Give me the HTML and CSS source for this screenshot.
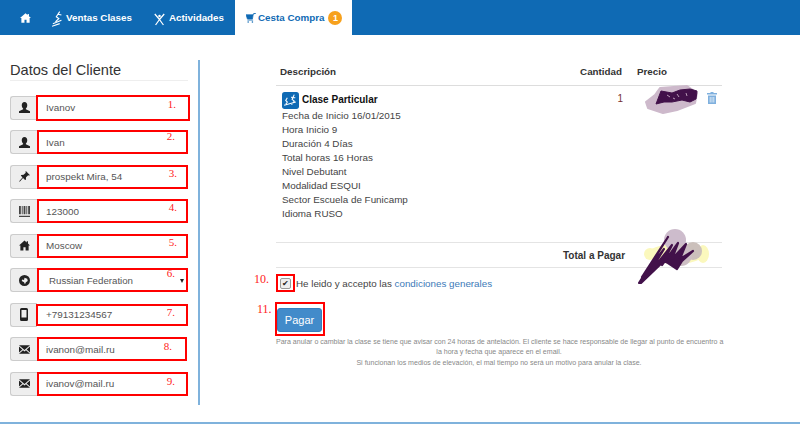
FILE: index.html
```html
<!DOCTYPE html>
<html lang="es">
<head>
<meta charset="utf-8">
<title>Cesta Compra</title>
<link rel="stylesheet" href="styles.css">
</head>
<body>
<nav class="nav">
  <a class="tab tab-home"><svg class="ic-home" viewBox="0 0 16 14"><path d="M8 0 L0 7 L2 7 L2 14 L6.5 14 L6.5 9.5 L9.5 9.5 L9.5 14 L14 14 L14 7 L16 7 L13 4.4 L13 1 L11 1 L11 2.7 Z" fill="#fff"/></svg></a>
  <a class="tab tab-ventas"><svg class="ic-ski" viewBox="0 0 14 18"><path d="M9 1 L5 7 L8 9 L4 13 M7 4 L11 5 M1 15 L11 11 M0 18 L9 15" fill="none" stroke="#fff" stroke-width="1.3"/></svg>Ventas Clases</a>
  <a class="tab tab-act"><svg class="ic-act" viewBox="0 0 14 16"><circle cx="7" cy="3.5" r="1.6" fill="#fff"/><path d="M1 1 L7 8 L13 1 M7 8 L2 15 M7 8 L12 15" fill="none" stroke="#fff" stroke-width="1.6"/></svg>Actividades</a>
  <a class="tab tab-active"><svg class="ic-cart" viewBox="0 0 14 13"><path d="M0 2 L10 2 L9 8 L2 8 Z M10 2 L11 0 L14 0 M2 9.5 L10 9.5" fill="#0f6ab4" stroke="#0f6ab4" stroke-width="1"/><circle cx="3" cy="12" r="1.1" fill="#0f6ab4"/><circle cx="9" cy="12" r="1.1" fill="#0f6ab4"/></svg>Cesta Compra<span class="badge">1</span></a>
</nav>

<main class="main">
  <section class="client">
    <h2 class="title">Datos del Cliente</h2>
    <div class="rows">
      <div class="row"><span class="addon"><svg class="ic" viewBox="0 0 12 12"><path d="M6 0 C8 0 9 1.5 9 3.5 C9 5 8.3 6.3 7.5 7 L7.5 8 L12 10 L12 12 L0 12 L0 10 L4.5 8 L4.5 7 C3.7 6.3 3 5 3 3.5 C3 1.5 4 0 6 0 Z"/></svg></span><div class="field f1">Ivanov<span class="num n1">1.</span></div></div>
      <div class="row"><span class="addon"><svg class="ic" viewBox="0 0 12 12"><path d="M6 0 C8 0 9 1.5 9 3.5 C9 5 8.3 6.3 7.5 7 L7.5 8 L12 10 L12 12 L0 12 L0 10 L4.5 8 L4.5 7 C3.7 6.3 3 5 3 3.5 C3 1.5 4 0 6 0 Z"/></svg></span><div class="field">Ivan<span class="num n2">2.</span></div></div>
      <div class="row"><span class="addon"><svg class="ic" viewBox="0 0 12 12"><path d="M7.5 0 L12 4.5 L10.8 5 L10 4.6 L7.7 6.9 L7.5 9.5 L6.6 9.7 L4.4 7.6 L0.8 11.6 L0.2 11.2 L3.8 7 L2 5 L2.5 4.3 L5 4 L7.4 1.8 L7 1 Z"/></svg></span><div class="field">prospekt Mira, 54<span class="num n3">3.</span></div></div>
      <div class="row"><span class="addon"><svg class="ic ic-bar" viewBox="0 0 12 12"><path d="M0 0H2V9H0ZM3 0H4V9H3ZM5 0H7V9H5ZM8 0H9V9H8ZM10 0H12V9H10ZM0 10.5H12V12H0Z"/></svg></span><div class="field">123000<span class="num n4">4.</span></div></div>
      <div class="row"><span class="addon"><svg class="ic" viewBox="0 0 12 11"><path d="M6 0 L0 5.5 L1.5 5.5 L1.5 11 L4.8 11 L4.8 7.5 L7.2 7.5 L7.2 11 L10.5 11 L10.5 5.5 L12 5.5 L9.8 3.4 L9.8 0.8 L8.4 0.8 L8.4 2.1 Z"/></svg></span><div class="field">Moscow<span class="num n5">5.</span></div></div>
      <div class="row"><span class="addon"><svg class="ic" viewBox="0 0 12 12"><path fill-rule="evenodd" d="M6 0 A6 6 0 1 0 6 12 A6 6 0 1 0 6 0 Z M6 3 L9 4 L9.5 6.5 L7.5 8 L6.5 10 L5.5 8 L3 6.5 L3.5 5 L5.5 5.5 Z"/></svg></span><div class="field field-select">Russian Federation<span class="num n6">6.</span><span class="caret"></span></div></div>
      <div class="row"><span class="addon"><svg class="ic ic-phone" viewBox="0 0 8 13"><path fill-rule="evenodd" d="M1.5 0 H6.5 Q8 0 8 1.5 V11.5 Q8 13 6.5 13 H1.5 Q0 13 0 11.5 V1.5 Q0 0 1.5 0 Z M1.5 2 V9.5 H6.5 V2 Z"/></svg></span><div class="field f7">+79131234567<span class="num n7">7.</span></div></div>
      <div class="row"><span class="addon"><svg class="ic" viewBox="0 0 13 10"><path d="M0 0 H13 L6.5 5.5 Z M0 1.5 L4 5 L0 8.5 Z M13 1.5 V8.5 L9 5 Z M0 10 L4.8 6 L6.5 7.3 L8.2 6 L13 10 Z"/></svg></span><div class="field f8">ivanon@mail.ru<span class="num n8">8.</span></div></div>
      <div class="row"><span class="addon"><svg class="ic" viewBox="0 0 13 10"><path d="M0 0 H13 L6.5 5.5 Z M0 1.5 L4 5 L0 8.5 Z M13 1.5 V8.5 L9 5 Z M0 10 L4.8 6 L6.5 7.3 L8.2 6 L13 10 Z"/></svg></span><div class="field">ivanov@mail.ru<span class="num n9">9.</span></div></div>
    </div>
  </section>

  <section class="cart">
    <div class="thead">
      <span class="col-desc">Descripción</span>
      <span class="col-qty">Cantidad</span>
      <span class="col-price">Precio</span>
    </div>
    <div class="item">
      <div class="col-desc details">
        <div class="item-title"><svg class="ic-class" viewBox="0 0 16 16"><rect width="16" height="16" rx="2.5" fill="#0f6ab4"/><path d="M11.5 2.5 L9.5 7 L11.5 8.5 L9 12 M8.5 5 L12.5 5.5 M5 5.5 L3.5 8 L5 9.5 L3.5 11.5 M2 12.5 L13 9.5" fill="none" stroke="#fff" stroke-width="1"/></svg><strong>Clase Particular</strong></div>
        <div>Fecha de Inicio 16/01/2015</div>
        <div>Hora Inicio 9</div>
        <div>Duración 4 Días</div>
        <div>Total horas 16 Horas</div>
        <div>Nivel Debutant</div>
        <div>Modalidad ESQUI</div>
        <div>Sector Escuela de Funicamp</div>
        <div>Idioma RUSO</div>
      </div>
      <div class="col-qty qty">1</div>
      <div class="col-price price">
        <svg class="scribble-price" viewBox="0 0 56 30"><path d="M2 17 L11 10 L16 3 L43 1 L53 8 L51 18 L33 25 L19 28 L4 23 Z" fill="#cdb9cb" stroke="#cdb9cb" stroke-width="2" stroke-linejoin="round"/><path d="M12 19 L17 6 L28 8 L36 5 L46 4 L53 6 L52 14 L46 17 L38 15 L28 17 L20 17 Z" fill="#42114a" stroke="#42114a" stroke-linejoin="round"/><path d="M23 10 L26 12 M33 9 L35 12 M42 8 L43 11 M29 13 L31 14" stroke="#b79ab5" stroke-width="1"/></svg>
        <svg class="ic-trash" viewBox="0 0 10 12"><path d="M3.5 0 H6.5 V1 H10 V2.5 H0 V1 H3.5 Z M1 3.5 H9 V12 H1 Z" fill="#7fb0de"/><path d="M3.2 5 V10.5 M5 5 V10.5 M6.8 5 V10.5" stroke="#fff" stroke-width=".7"/></svg>
      </div>
    </div>
    <div class="total">
      <strong class="total-label">Total a Pagar</strong>
      <svg class="scribble-total" viewBox="0 0 74 60"><ellipse cx="40" cy="27" rx="28" ry="10" fill="#fbf8bd"/><ellipse cx="14" cy="27" rx="6" ry="6" fill="#fbf8bd"/><ellipse cx="67" cy="27" rx="6" ry="9" fill="#fbf8bd"/><circle cx="39" cy="13" r="11" fill="#cdbccc"/><circle cx="57" cy="24" r="9" fill="#cbc0bb"/><circle cx="45" cy="28" r="11" fill="#cdbfc4"/><path d="M3 56 L32 10 L6 50 L28 22 L12 48 L36 18 L26 38 L42 16 L36 32 L50 17 L44 32 L57 24 L46 34 L41 42 L32 36 L28 34 L5 56 Z" fill="#42114a" stroke="#42114a" stroke-width="2.2" stroke-linejoin="round"/></svg>
    </div>
    <div class="accept">
      <span class="num n10">10.</span>
      <span class="check-frame"><span class="check">✔</span></span>
      <span>He leido y accepto las <a class="link">condiciones generales</a></span>
    </div>
    <div class="pay">
      <span class="num n11">11.</span>
      <span class="pay-frame"><button class="btn" type="button">Pagar</button></span>
    </div>
    <p class="legal">Para anular o cambiar la clase se tiene que avisar con 24 horas de antelación. El cliente se hace responsable de llegar al punto de encuentro a<br>la hora y fecha que aparece en el email.<br>Si funcionan los medios de elevación, el mal tiempo no será un motivo para anular la clase.</p>
  </section>
</main>
<footer class="foot"></footer>
</body>
</html>
```
FILE: styles.css
```css
* { box-sizing: border-box; }
html, body { margin: 0; padding: 0; }
body {
  width: 800px;
  height: 424px;
  overflow: hidden;
  background: #fff;
  color: #333;
  font-family: "Liberation Sans", Arial, sans-serif;
  font-size: 10px;
  position: relative;
}

/* nav */
.nav { height: 35px; background: #0f6ab4; display: flex; align-items: stretch; }
.tab { display: flex; align-items: center; color: #fff; font-weight: 700; font-size: 9.8px; white-space: nowrap; }
.tab-home { margin-left: 20px; width: 32px; }
.ic-home { width: 11px; height: 10px; }
.tab-ventas { width: 101px; padding-bottom: 1px; }
.ic-ski { width: 12px; height: 17px; margin-right: 2px; margin-top: 3px; }
.tab-act { width: 82px; }
.ic-act { width: 11px; height: 13px; margin: 3px 4px 0 1px; }
.tab-active { width: 117px; background: #fff; color: #0f6ab4; padding-left: 11px; }
.ic-cart { width: 10px; height: 10px; margin-right: 2px; }
.badge {
  width: 14px; height: 14px; margin-left: 4px; border-radius: 50%;
  background: #f7a11d; color: #fff; font-size: 9px; text-align: center; line-height: 14px;
}

/* main */
.main { display: flex; align-items: flex-start; height: 387px; }
.client { width: 200px; height: 345px; margin-top: 25px; padding: 0 10px; border-right: 2px solid #7fb2dc; }
.title {
  margin: 0; height: 21px; padding-top: 2px;
  font-weight: 400; font-size: 14.6px; line-height: 17px; color: #333;
  border-bottom: 1px solid #eee; width: 178px;
}
.rows { display: flex; flex-direction: column; gap: 10.5px; margin-top: 14.5px; width: 178px; }
.row { display: flex; height: 24px; }
.addon {
  width: 27px; flex: none; display: flex; align-items: center; justify-content: center;
  background: #eee; border: 1px solid #ccc; border-right: 0; border-radius: 3px 0 0 3px;
}
.ic { width: 11px; height: 11px; fill: #222; }
.ic-bar { fill: #444; }
.ic-phone { width: 8px; height: 13px; }
.field {
  flex: 1; position: relative; display: flex; align-items: center;
  border: 2px solid #f00; background: #fff; padding-left: 7px; color: #555; font-size: 9.9px;
}
.f1 { margin: -1px -2px -1px -1px; padding-left: 8px; }
.f7 { margin: 1px 0 1px -1px; padding-left: 8px; }
.f8 { margin-right: 1px; }
.field-select { padding-left: 10px; font-size: 9.7px; }
.caret {
  position: absolute; right: 2px; top: 9px; width: 0; height: 0;
  border-left: 2.5px solid transparent; border-right: 2.5px solid transparent; border-top: 4px solid #222;
}

/* annotation numbers */
.num { position: absolute; color: #f22; font-family: "Liberation Serif", serif; font-size: 11px; line-height: 11px; }
.n1 { right: 12px; top: 2px; }
.n2 { right: 11px; top: -1px; }
.n3, .n4, .n5 { right: 9px; top: 1px; }
.n6 { right: 11px; top: -2px; }
.n7 { right: 11px; top: 1px; }
.n8 { right: 13px; top: 2px; }
.n9 { right: 11px; top: 2px; }

/* cart */
.cart { width: 446px; margin: 25px 0 0 76px; }
.thead { display: flex; height: 26px; align-items: center; font-weight: 700; border-bottom: 1px solid #ddd; padding: 0 0 3px 4px; font-size: 9.8px; }
.col-desc { width: 297px; }
.col-qty { width: 45px; text-align: right; }
.col-price { margin-left: 15px; width: 85px; }
.item { display: flex; height: 156px; padding: 5px 0 0 6px; }
.item .col-desc { width: 295px; }
.details { line-height: 14px; color: #444; font-size: 9.85px; }
.item-title { display: flex; align-items: center; height: 18px; color: #111; font-size: 10px; }
.ic-class { width: 17px; height: 17px; margin-right: 3px; }
.qty { color: #733; font-size: 10px; padding-top: 2px; position: relative; left: 1px; }
.price { display: flex; align-items: flex-start; margin-left: 15px; }
.scribble-price { width: 56px; height: 30px; margin: -6px 0 0 7px; flex: none; }
.ic-trash { width: 10px; height: 12px; margin: 1px 0 0 7px; flex: none; }
.total {
  position: relative; height: 26px; display: flex; align-items: center;
  border-top: 1px solid #e4e4e4; border-bottom: 1px solid #e4e4e4; padding-left: 287px;
}
.total-label { font-size: 10px; color: #333; }
.scribble-total { position: absolute; left: 360px; top: -16px; width: 74px; height: 60px; }
.accept { position: relative; display: flex; align-items: center; gap: 1px; height: 20px; margin-top: 5px; font-size: 9.8px; color: #444; }
.check-frame { width: 19px; height: 18px; border: 2px solid #f00; display: flex; align-items: center; justify-content: center; }
.check { width: 11px; height: 11px; background: #eee; border: 1px solid #999; border-radius: 2px; font-size: 8px; line-height: 9px; text-align: center; color: #222; }
.link { color: #3d7ab8; }
.n10 { left: -22px; top: 1px; font-size: 12px; }
.pay { position: relative; margin-top: 9px; height: 34.5px; }
.pay-frame { display: inline-block; height: 34px; border: 2px solid #f00; padding: 4px 1px 2px 0; margin-left: -1px; }
.btn {
  display: block; width: 45px; height: 24px; padding: 0;
  background: #428bca; border: 1px solid #357ebd; border-radius: 3px; color: #fff;
  font-family: inherit; font-size: 11px;
}
.n11 { left: -19px; top: 2px; font-size: 12px; }
.legal { margin: 0; font-size: 7.05px; line-height: 10.5px; text-align: center; color: #888; white-space: nowrap; }

.foot { position: absolute; left: 0; right: 0; bottom: 0; height: 2px; background: #7fb2dc; }
```
